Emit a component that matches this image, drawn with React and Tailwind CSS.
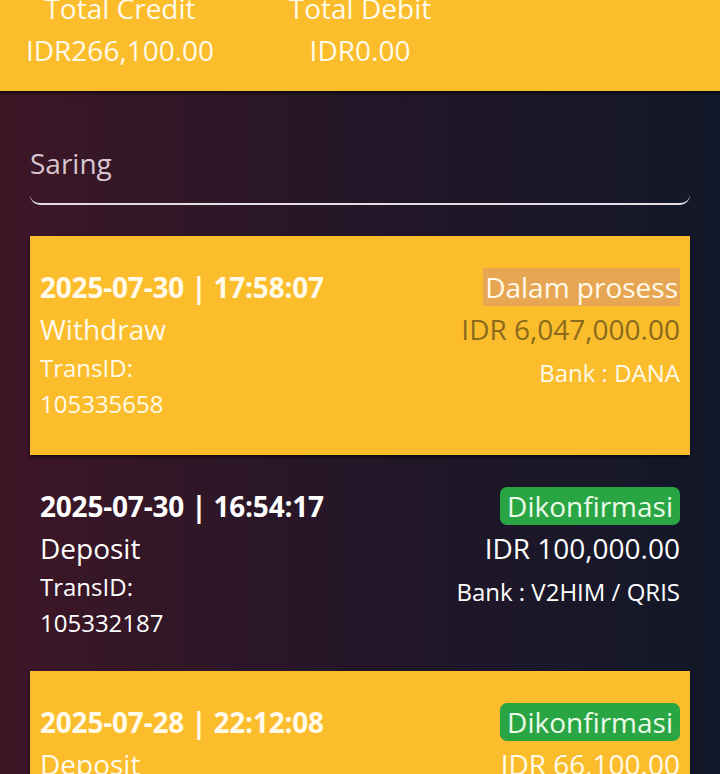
import React from "react";

const txs = [
  {
    date: "2025-07-30 | 17:58:07",
    type: "Withdraw",
    id: "105335658",
    status: "Dalam prosess",
    pending: true,
    amount: "IDR 6,047,000.00",
    bank: "Bank : DANA",
    yellow: true,
  },
  {
    date: "2025-07-30 | 16:54:17",
    type: "Deposit",
    id: "105332187",
    status: "Dikonfirmasi",
    amount: "IDR 100,000.00",
    bank: "Bank : V2HIM / QRIS",
    yellow: false,
  },
  {
    date: "2025-07-28 | 22:12:08",
    type: "Deposit",
    id: "105321904",
    status: "Dikonfirmasi",
    amount: "IDR 66,100.00",
    bank: "Bank : V2HIM / QRIS",
    yellow: true,
  },
];

function Card({ t }) {
  return (
    <div
      className={
        "flex justify-between pl-[10px] pr-[10px] pt-[30px] " +
        (t.yellow
          ? "pb-[33px] bg-[#fbbd2b] shadow-[0_2px_3px_rgba(0,0,0,0.6)] text-[#fffaea]"
          : "pb-[30px] text-white")
      }
    >
      <div className="flex flex-col">
        <div className="text-[28px] leading-[42px] font-bold tracking-[-0.2px]">{t.date}</div>
        <div className="text-[28px] leading-[42px]">{t.type}</div>
        <div className="text-[24px] leading-[36px]">TransID:</div>
        <div className="text-[24px] leading-[36px]">{t.id}</div>
      </div>
      <div className="flex flex-col items-end">
        <div className="h-[42px] flex items-center">
          <span
            className={
              "text-[28px] leading-[38px] " +
              (t.pending
                ? "bg-[#e7a654] px-[2px]"
                : "bg-[#2aa544] rounded-[7px] px-[7px] text-[#eafbe9]")
            }
          >
            {t.status}
          </span>
        </div>
        <div
          className={
            "text-[28px] leading-[42px] " +
            (t.pending ? "text-[#8a6a1c]" : "")
          }
        >
          {t.amount}
        </div>
        <div className="text-[24px] leading-[36px] mt-[5px]">{t.bank}</div>
      </div>
    </div>
  );
}

export default function App() {
  return (
    <div
      className="w-[720px] h-[774px] overflow-hidden bg-gradient-to-r from-[#3e1626] via-[#231628] to-[#121829]"
      style={{ fontFamily: '"Open Sans", "Noto Sans", sans-serif' }}
    >
      <div className="bg-[#fbbd2b] h-[91px] shadow-[0_2px_3px_rgba(0,0,0,0.7)] relative flex flex-col">
        <div className="grid grid-cols-3 mt-[-13px] text-[28px] leading-[42px] text-[#fffaea] text-center">
          <div className="flex flex-col">
            <span>Total Credit</span>
            <span>IDR266,100.00</span>
          </div>
          <div className="flex flex-col">
            <span>Total Debit</span>
            <span>IDR0.00</span>
          </div>
          <div />
        </div>
      </div>
      <div className="px-[30px] pt-[41px]">
        <div className="h-[73px] flex items-center border-b-2 border-[#e4dde6] rounded-b-[10px] text-[28px] text-[#d8c6d0] pb-[10px]">
          Saring
        </div>
        <div className="mt-[31px] flex flex-col">
          {txs.map((t, i) => (
            <Card key={i} t={t} />
          ))}
        </div>
      </div>
    </div>
  );
}
